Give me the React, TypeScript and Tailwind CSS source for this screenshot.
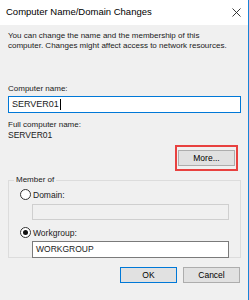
import React from "react";

function Radio({ checked }: { checked?: boolean }) {
  return (
    <span className="w-[11px] h-[11px] rounded-full border border-[#333] bg-white flex items-center justify-center shrink-0">
      {checked && <span className="w-[5px] h-[5px] rounded-full bg-[#111]" />}
    </span>
  );
}

function WinButton({ label, primary }: { label: string; primary?: boolean }) {
  return (
    <button
      className={`w-[57px] h-[16px] bg-[#e1e1e1] border text-[8.5px] leading-none text-black flex items-center justify-center ${
        primary ? "border-[#0078d7]" : "border-[#adadad]"
      }`}
    >
      {label}
    </button>
  );
}

export default function App() {
  return (
    <div
      className="w-[249px] h-[300px] bg-[#f0f0f0] border-r border-[#1883d7] overflow-hidden text-[#1a1a1a]"
      style={{ fontFamily: '"Liberation Sans", Arial, sans-serif' }}
    >
      {/* Title bar */}
      <div className="h-[25px] bg-white flex items-center justify-between pl-[6px] pr-[7px]">
        <span className="text-[9.5px] text-black">Computer Name/Domain Changes</span>
        <svg width="9" height="9" viewBox="0 0 9 9">
          <path d="M0.5 0.5 L8.5 8.5 M8.5 0.5 L0.5 8.5" stroke="#222" strokeWidth="0.9" />
        </svg>
      </div>

      <div className="px-[8px] pr-[7px]">
        <p className="mt-[6px] text-[8px] leading-[10px]">
          You can change the name and the membership of this
          <br />
          computer. Changes might affect access to network resources.
        </p>

        <div className="mt-[33px] text-[8px] leading-[10px]">Computer name:</div>
        <div className="mt-[2px] h-[17px] border border-[#0078d7] bg-white flex items-center pl-[3px] text-[9px]">
          SERVER01
          <span className="w-px h-[11px] bg-black ml-px" />
        </div>

        <div className="mt-[7px] text-[8px] leading-[10px]">Full computer name:</div>
        <div className="text-[8.5px] leading-[10px]">SERVER01</div>

        <div className="mt-[5px] flex justify-end pr-[3px]">
          <div className="border-2 border-[#e8413f] px-px py-[3px]">
            <WinButton label="More..." />
          </div>
        </div>

        <fieldset className="mt-[4px] border border-[#dcdcdc] h-[83px]">
          <legend className="ml-[5px] px-[2px] text-[8px] leading-[10px]">Member of</legend>
          <div className="pl-[11px] pr-[11px]">
            <label className="mt-[4px] flex items-center gap-[2px] text-[8.5px] leading-[10px]">
              <Radio />
              Domain:
            </label>
            <div className="mt-[4px] ml-[12px] h-[16px] border border-[#cfcfcf] bg-[#f0f0f0]" />
            <label className="mt-[7px] flex items-center gap-[2px] text-[8.5px] leading-[10px]">
              <Radio checked />
              Workgroup:
            </label>
            <div className="mt-[3px] ml-[12px] h-[17px] border border-[#7a7a7a] bg-white flex items-center pl-[3px] text-[8.5px]">
              WORKGROUP
            </div>
          </div>
        </fieldset>

        <div className="mt-[9px] flex justify-end gap-[6px] pr-[1px]">
          <WinButton label="OK" primary />
          <WinButton label="Cancel" />
        </div>
      </div>
    </div>
  );
}
